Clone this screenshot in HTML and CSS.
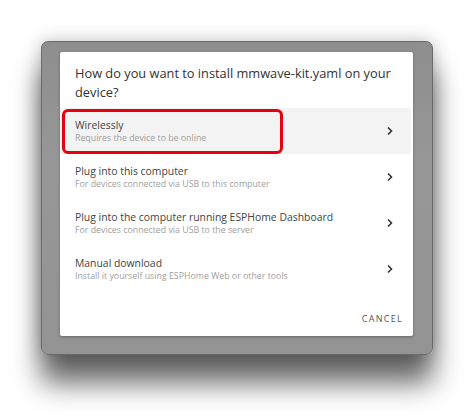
FILE: index.html
```html
<!DOCTYPE html>
<html>
<head>
<meta charset="utf-8">
<link rel="stylesheet" href="styles.css">
</head>
<body>
<div class="frame">
  <div class="dialog">
    <h2 class="title">How do you want to install mmwave-kit.yaml on your device?</h2>
    <div class="list">
      <div class="row active">
        <div class="text">
          <div class="primary">Wirelessly</div>
          <div class="secondary">Requires the device to be online</div>
        </div>
        <svg class="chev" width="8" height="10" viewBox="0 0 8 10"><path d="M2 1.5 L5.5 5 L2 8.5" fill="none" stroke="#333" stroke-width="1.6"/></svg>
        <div class="mark"></div>
      </div>
      <div class="row">
        <div class="text">
          <div class="primary">Plug into this computer</div>
          <div class="secondary">For devices connected via USB to this computer</div>
        </div>
        <svg class="chev" width="8" height="10" viewBox="0 0 8 10"><path d="M2 1.5 L5.5 5 L2 8.5" fill="none" stroke="#333" stroke-width="1.6"/></svg>
      </div>
      <div class="row">
        <div class="text">
          <div class="primary">Plug into the computer running ESPHome Dashboard</div>
          <div class="secondary">For devices connected via USB to the server</div>
        </div>
        <svg class="chev" width="8" height="10" viewBox="0 0 8 10"><path d="M2 1.5 L5.5 5 L2 8.5" fill="none" stroke="#333" stroke-width="1.6"/></svg>
      </div>
      <div class="row">
        <div class="text">
          <div class="primary">Manual download</div>
          <div class="secondary">Install it yourself using ESPHome Web or other tools</div>
        </div>
        <svg class="chev" width="8" height="10" viewBox="0 0 8 10"><path d="M2 1.5 L5.5 5 L2 8.5" fill="none" stroke="#333" stroke-width="1.6"/></svg>
      </div>
    </div>
    <div class="actions"><span class="cancel">CANCEL</span></div>
  </div>
</div>
</body>
</html>
```
FILE: styles.css
```css
html, body { margin: 0; padding: 0; background: #fff; }
body { font-family: "Open Sans", "Noto Sans", sans-serif; width: 474px; height: 416px; overflow: hidden; }
.frame {
  margin: 41px 0 0 41px;
  width: 392px;
  height: 314px;
  box-sizing: border-box;
  padding: 10px 19px 19px 18px;
  background: linear-gradient(#8e8e8e, #979797 40%, #939393);
  border: 1px solid #6a6a6a;
  border-radius: 7px;
  box-shadow: 0 28px 28px rgba(0,0,0,0.6), 0 0 18px rgba(0,0,0,0.25);
}
.dialog {
  background: #fff;
  height: 284px;
  border-radius: 2px;
  box-shadow: 0 1px 3px rgba(0,0,0,0.3);
  display: flex;
  flex-direction: column;
}
.title {
  margin: 0;
  padding: 12px 8px 0 15px;
  font-size: 12.8px;
  font-weight: normal;
  line-height: 19px;
  color: #333;
  height: 44px;
}
.list { display: flex; flex-direction: column; }
.row {
  position: relative;
  height: 46px;
  display: flex;
  align-items: center;
  padding: 0 17px 0 15px;
  margin-right: 2px;
}
.row.active { background: #f3f3f3; }
.text { flex: 1; }
.primary { font-size: 10.4px; line-height: 14px; color: #444; }
.secondary { font-size: 8.8px; line-height: 12px; color: #a0a0a0; }
.chev { display: block; }
.mark {
  position: absolute;
  left: 2px; top: 1px;
  width: 221px; height: 45px;
  box-sizing: border-box;
  border: 3px solid #e8000e;
  border-radius: 6px;
}
.actions {
  flex: 1;
  display: flex;
  justify-content: flex-end;
  align-items: flex-end;
  padding: 0 10px 11px 0;
}
.cancel { font-size: 9px; letter-spacing: 1.3px; color: #555; line-height: 12px; }
```
